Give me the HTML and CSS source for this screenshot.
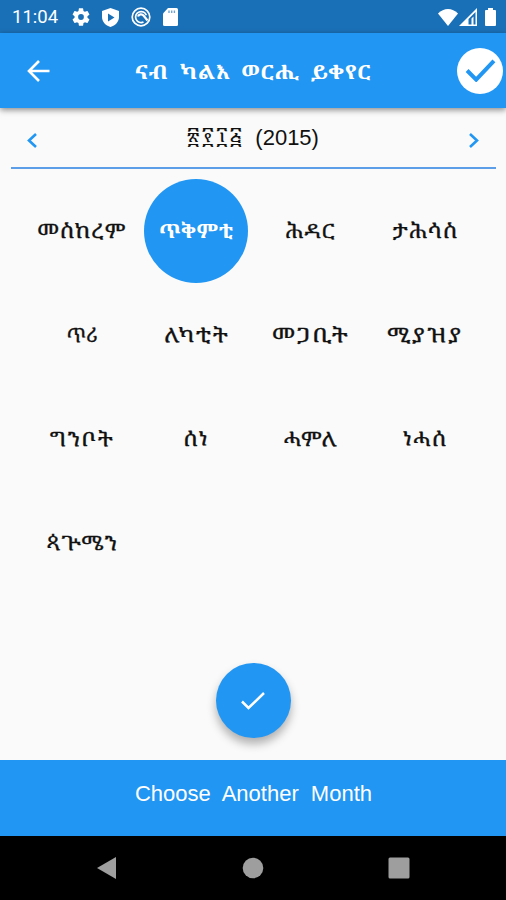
FILE: index.html
```html
<!DOCTYPE html>
<html lang="ti">
<head>
    <meta charset="UTF-8">
    <meta name="viewport" content="width=device-width, initial-scale=1.0">
    <title>ናብ ካልእ ወርሒ ይቀየር</title>
    <link rel="stylesheet" href="styles.css">
</head>
<body>
    <div class="status-bar">
        <span class="clock">11:04</span>
        <svg class="status-icon gear" viewBox="2 2 20 20"><path fill-rule="evenodd" d="M19.14 12.94c.04-.3.06-.61.06-.94 0-.32-.02-.64-.07-.94l2.03-1.58a.49.49 0 0 0 .12-.61l-1.92-3.32a.488.488 0 0 0-.59-.22l-2.39.96c-.5-.38-1.03-.7-1.62-.94l-.36-2.54a.484.484 0 0 0-.48-.41h-3.84c-.24 0-.43.17-.47.41l-.36 2.54c-.59.24-1.13.57-1.62.94l-2.39-.96c-.22-.08-.47 0-.59.22L2.74 8.87c-.12.21-.08.47.12.61l2.03 1.58c-.05.3-.09.63-.09.94s.02.64.07.94l-2.03 1.58a.49.49 0 0 0-.12.61l1.92 3.32c.12.22.37.29.59.22l2.39-.96c.5.38 1.03.7 1.62.94l.36 2.54c.05.24.24.41.48.41h3.84c.24 0 .44-.17.47-.41l.36-2.54c.59-.24 1.13-.56 1.62-.94l2.39.96c.22.08.47 0 .59-.22l1.92-3.32c.12-.22.07-.47-.12-.61zM12 15.2a3.2 3.2 0 1 1 0-6.4 3.2 3.2 0 0 1 0 6.4z"/></svg>
        <svg class="status-icon shield" viewBox="0 0 17 19"><path fill-rule="evenodd" d="M8.500 0L17 3v6c0 4.700-3.500 8.500-8.500 10C3.500 17.500 0 13.700 0 9V3zM6 5.500v8l6.500-4z"/></svg>
        <svg class="status-icon sync" viewBox="0 0 20 20"><g fill="none" stroke="#fff" stroke-width="1.700"><circle cx="10" cy="10" r="8.800"/><path d="M12.500 15A5.500 5.500 0 1 1 15.300 8.300"/><path d="M7 9.500a3.200 3.200 0 0 1 5.500-1L16.500 13.500" stroke-width="2.200"/></g></svg>
        <svg class="status-icon card" viewBox="0 0 15 18"><path d="M5 0h8.500Q15 0 15 1.500v15q0 1.500-1.500 1.500h-12Q0 18 0 16.500V5.500z"/><path class="slots" d="M6 2.500v2.500M8.700 2.500v2.500M11.400 2.500v2.500"/></svg>
        <div class="status-right">
            <svg class="wifi" viewBox="0 0 20 17"><path d="M10 17L0 4.500Q4.500 0 10 0t10 4.500z"/></svg>
            <svg class="signal" viewBox="0 0 18 18"><path fill-rule="evenodd" d="M18 0v18H0zM16.500 4L9.500 11v5.500h3V10.500l2-2v8h2z"/></svg>
            <svg class="battery" viewBox="0 0 11 18"><path d="M3 0h5v2h2q1 0 1 1v14q0 1-1 1H1q-1 0-1-1V3q0-1 1-1h2z"/></svg>
        </div>
    </div>

    <header class="app-bar">
        <svg class="back" viewBox="0 0 22 22"><path d="M22 11H2M11.500 1L1.500 11l10 10"/></svg>
        <h1>ናብ ካልእ ወርሒ ይቀየር</h1>
        <div class="done">
            <svg viewBox="0 0 32 24"><path d="M2 12l9.500 9.500L30 2"/></svg>
        </div>
    </header>

    <main>
        <div class="year-picker">
            <svg class="arrow" viewBox="0 0 10 15"><path d="M9 1L2 7.500 9 14"/></svg>
            <div class="year"><span class="geez">፳፻፲፭</span> (2015)</div>
            <svg class="arrow" viewBox="0 0 10 15"><path d="M1 1l7 6.500L1 14"/></svg>
        </div>

        <div class="months">
            <div class="month"><span>መስከረም</span></div>
            <div class="month selected"><span>ጥቅምቲ</span></div>
            <div class="month"><span>ሕዳር</span></div>
            <div class="month"><span>ታሕሳስ</span></div>
            <div class="month short"><span>ጥሪ</span></div>
            <div class="month"><span>ለካቲት</span></div>
            <div class="month wide"><span>መጋቢት</span></div>
            <div class="month wide"><span>ሚያዝያ</span></div>
            <div class="month"><span>ግንቦት</span></div>
            <div class="month"><span>ሰነ</span></div>
            <div class="month"><span>ሓምለ</span></div>
            <div class="month"><span>ነሓሰ</span></div>
            <div class="month"><span>ጳጕሜን</span></div>
        </div>

        <div class="confirm">
            <svg viewBox="0 0 24 18"><path d="M1 9.500l6.500 6.500L23 1"/></svg>
        </div>
    </main>

    <footer class="bottom-bar">Choose Another Month</footer>

    <nav class="nav-bar">
        <svg viewBox="0 0 22 24"><path d="M20 1v22L1 12z"/></svg>
        <svg viewBox="0 0 22 24"><circle cx="11" cy="12" r="10.300"/></svg>
        <svg viewBox="0 0 22 24"><rect x="0.500" y="1.500" width="21" height="21" rx="1.500"/></svg>
    </nav>
</body>
</html>
```
FILE: styles.css
```css
* {
    box-sizing: border-box;
}

body {
    margin: 0;
    height: 900px;
    display: flex;
    flex-direction: column;
    font-family: "Liberation Sans", "Noto Serif Ethiopic", "Abyssinica SIL", sans-serif;
    background-color: #fafafa;
    color: #111;
    overflow: hidden;
}

svg {
    display: block;
    flex: none;
}

.status-bar {
    height: 33px;
    display: flex;
    align-items: center;
    padding: 1px 10px 0 12px;
    background-color: #1a70b7;
    color: white;
    fill: white;
}

.clock {
    width: 60px;
    font-family: Roboto, sans-serif;
    font-size: 18.5px;
}

.gear {
    width: 18px;
    height: 18px;
}

.shield {
    width: 17px;
    height: 19px;
    margin-left: 12px;
}

.sync {
    width: 20px;
    height: 20px;
    margin-left: 12px;
}

.card {
    width: 15px;
    height: 18px;
    margin-left: 12px;
}

.slots {
    stroke: #6fa5d2;
    stroke-width: 1.4;
}

.status-right {
    display: flex;
    align-items: center;
    margin-left: auto;
}

.wifi {
    width: 20px;
    height: 17px;
}

.signal {
    width: 18px;
    height: 18px;
    margin: 0 8px 0 1px;
}

.battery {
    width: 11px;
    height: 18px;
}

.app-bar {
    height: 75px;
    display: flex;
    align-items: center;
    padding: 0 3px 0 27px;
    background-color: #2196f3;
    color: white;
    box-shadow: 0 2px 6px rgba(0, 0, 0, 0.45);
}

.back {
    width: 23px;
    height: 22px;
    fill: none;
    stroke: white;
    stroke-width: 2.6;
}

.app-bar h1 {
    flex: 1;
    margin: 1px 0 0;
    font-size: 20px;
    font-weight: bold;
    letter-spacing: 0.4px;
    word-spacing: 4px;
    text-align: center;
    white-space: nowrap;
    transform: scaleX(1.125);
}

.done {
    width: 46px;
    height: 46px;
    display: flex;
    align-items: center;
    justify-content: center;
    border-radius: 50%;
    background-color: white;
}

.done svg {
    width: 31px;
    height: 23px;
    fill: none;
    stroke: #2196f3;
    stroke-width: 4.2;
}

main {
    flex: 1;
    display: flex;
    flex-direction: column;
    align-items: center;
}

.year-picker {
    width: 485px;
    height: 61px;
    display: flex;
    align-items: center;
    justify-content: space-between;
    padding: 5px 16px 0;
    border-bottom: 2px solid #5c9fe8;
}

.year {
    padding-bottom: 6px;
    font-size: 22px;
    word-spacing: 5px;
}

.geez {
    font-size: 21px;
    letter-spacing: 2.5px;
}

.arrow {
    width: 10px;
    height: 15px;
    fill: none;
    stroke: #2196f3;
    stroke-width: 2.6;
}

.months {
    width: 447px;
    display: grid;
    grid-template-columns: repeat(4, 104px);
    grid-auto-rows: 104px;
    justify-content: space-between;
    margin-top: 10px;
}

.month {
    display: flex;
    align-items: center;
    justify-content: center;
    padding: 0 0 1px 1px;
    border-radius: 50%;
    font-size: 20px;
    letter-spacing: 0.7px;
    white-space: nowrap;
}

.month span {
    transform: scaleX(1.15);
    -webkit-text-stroke: 0.3px currentColor;
}

.month.wide {
    letter-spacing: 1.2px;
}

.month.wide span {
    transform: scaleX(1.22);
}

.month.short {
    letter-spacing: 0;
}

.month.short span {
    transform: none;
}

.month.selected {
    background-color: #2196f3;
    color: white;
    font-weight: bold;
    letter-spacing: 0;
}

.month.selected span {
    transform: scaleX(1.05);
    -webkit-text-stroke: 0;
}

.confirm {
    width: 75px;
    height: 75px;
    display: flex;
    align-items: center;
    justify-content: center;
    margin-top: 68px;
    border-radius: 50%;
    background-color: #2196f3;
    box-shadow: 0 6px 10px rgba(0, 0, 0, 0.3);
}

.confirm svg {
    width: 24px;
    height: 18px;
    fill: none;
    stroke: white;
    stroke-width: 2.5;
}

.bottom-bar {
    height: 76px;
    padding: 21px 0 0 1px;
    background-color: #2196f3;
    color: white;
    font-size: 22px;
    word-spacing: 6px;
    text-align: center;
}

.nav-bar {
    height: 64px;
    display: flex;
    justify-content: space-between;
    padding: 20px 96px 0 96px;
    background-color: black;
    fill: #9e9e9e;
}

.nav-bar svg {
    width: 22px;
    height: 24px;
}
```
